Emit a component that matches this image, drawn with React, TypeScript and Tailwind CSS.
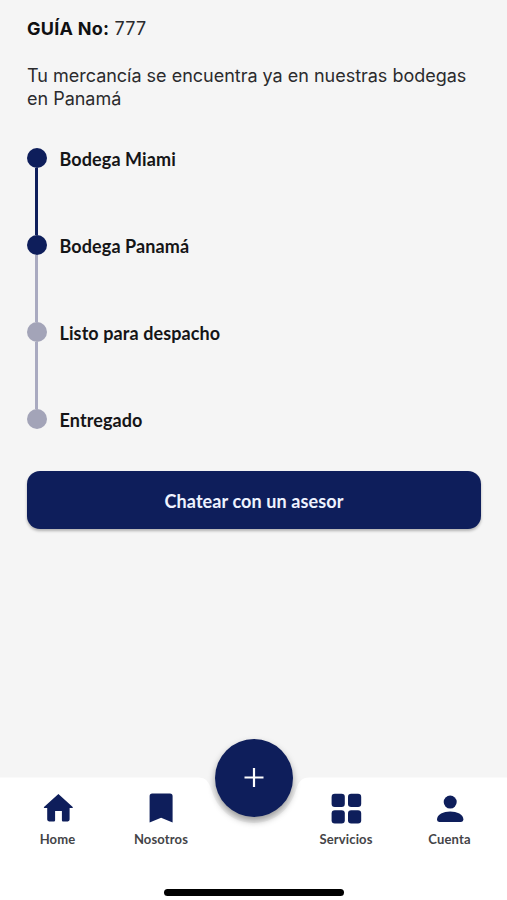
import React from "react";

type Step = { label: string; done: boolean; lineDone?: boolean };

const steps: Step[] = [
  { label: "Bodega Miami", done: true, lineDone: true },
  { label: "Bodega Panamá", done: true, lineDone: false },
  { label: "Listo para despacho", done: false, lineDone: false },
  { label: "Entregado", done: false },
];

function HomeIcon() {
  return (
    <svg className="block h-[32px] w-[32px]" viewBox="0 0 32 32" fill="currentColor">
      <path d="M16.4 2 30.7 15.1Q31.3 16 30.3 16H27.6V27.6Q27.6 29.4 25.8 29.4H21Q19.9 29.4 19.9 28.2V19H13.1V28.2Q13.1 29.4 11.9 29.4H7.1Q5.2 29.4 5.2 27.6V16H2.4Q1.4 16 2 15.1Z" />
    </svg>
  );
}

function BookmarkIcon() {
  return (
    <svg className="block h-[32px] w-[32px]" viewBox="0 0 32 32" fill="currentColor">
      <path d="M7.2 1.6H25Q27.6 1.6 27.6 4.2V30.6L16.1 25.8 4.6 30.6V4.2Q4.6 1.6 7.2 1.6Z" />
    </svg>
  );
}

function GridIcon() {
  return (
    <svg className="block h-[32px] w-[32px]" viewBox="0 0 32 32" fill="currentColor">
      <rect x="1.6" y="1.8" width="13.2" height="13.2" rx="3.2" />
      <rect x="18" y="1.8" width="13.2" height="13.2" rx="3.2" />
      <rect x="1.6" y="18.2" width="13.2" height="13.2" rx="3.2" />
      <rect x="18" y="18.2" width="13.2" height="13.2" rx="3.2" />
    </svg>
  );
}

function UserIcon() {
  return (
    <svg className="block h-[32px] w-[32px]" viewBox="0 0 32 32" fill="currentColor">
      <circle cx="16.2" cy="10.1" r="6.5" />
      <path d="M3 27.5C3 22.4 9.5 19.5 16.2 19.5s13.2 2.9 13.2 8Q29.4 29.9 27.1 29.9H5.2Q3 29.9 3 27.5Z" />
    </svg>
  );
}

function NavItem({ label, children }: { label: string; children: React.ReactNode }) {
  return (
    <button className="flex w-[103.5px] flex-col items-center pt-[15px] text-[#0e1e5b]">
      {children}
      <span className="mt-[6px] text-[13px] leading-[18px] font-bold tracking-[0.15px] text-[#444447]">{label}</span>
    </button>
  );
}

export default function App() {
  return (
    <div className="flex h-[900px] w-[507px] flex-col overflow-hidden bg-[#f5f5f5] font-['Lato',sans-serif]">
      <main className="flex-1 px-[27px] pt-[17px]">
        <header className="font-['Inter',sans-serif] text-[18px] leading-[23.5px] text-[#2b2b2d]">
          <h1 className="tracking-[0.25px]">
            <strong className="font-bold text-[#101012]">GUÍA No:</strong> 777
          </h1>
          <p className="mt-[23px] w-[450px] tracking-[-0.01px]">
            Tu mercancía se encuentra ya en nuestras bodegas en Panamá
          </p>
        </header>

        <ol className="mt-[37.5px]">
          {steps.map((s) => (
            <li key={s.label} className="flex h-[87px] gap-[13px] last:h-[20px]">
              <div className="flex w-[19.5px] flex-col items-center">
                <span className={`size-[19.5px] shrink-0 rounded-full ${s.done ? "bg-[#0e1e5b]" : "bg-[#a3a4b8]"}`} />
                {s.lineDone !== undefined && (
                  <span className={`w-[3px] flex-1 ${s.lineDone ? "bg-[#0e1e5b]" : "bg-[#a9aac0]"}`} />
                )}
              </div>
              <span className="text-[18px] leading-[22px] font-bold tracking-[0.1px] text-[#151517]">{s.label}</span>
            </li>
          ))}
        </ol>

        <button className="mt-[41.5px] flex h-[58px] w-[454px] items-center justify-center rounded-[13px] bg-[#0e1e5b] pt-[3px] text-[18px] font-bold tracking-[0.1px] text-[#eef3ff] shadow-[0_2px_3px_rgba(0,0,0,0.28)]">
          Chatear con un asesor
        </button>
      </main>

      <footer className="relative h-[123px]">
        <svg className="absolute inset-0 h-[123px] w-[507px]" viewBox="0 0 507 123">
          <path
            fill="#ffffff"
            d="M0 .5H198C206 .5 209 5 211.5 13C217 32 233 46 253.7 46S290.500 32 296 13C298.500 5 301.500 .5 309.500 .5H507V123H0Z"
          />
        </svg>
        <button className="absolute top-[-38.5px] left-[214.700px] flex size-[78px] items-center justify-center rounded-full bg-[#0e1e5b] shadow-[0_4px_7px_rgba(0,0,0,0.38)]">
          <svg className="size-[20px]" viewBox="0 0 20 20" stroke="#ffffff" strokeWidth="2.2">
            <path d="M10 0V19M.5 9.5H19.500" />
          </svg>
        </button>
        <nav className="relative flex justify-between px-[5.75px] pointer-events-none">
          <div className="flex">
            <NavItem label="Home"><HomeIcon /></NavItem>
            <NavItem label="Nosotros"><BookmarkIcon /></NavItem>
          </div>
          <div className="flex">
            <NavItem label="Servicios"><GridIcon /></NavItem>
            <NavItem label="Cuenta"><UserIcon /></NavItem>
          </div>
        </nav>
        <div className="relative mx-auto mt-[41px] h-[6.500px] w-[180px] rounded-full bg-black" />
      </footer>
    </div>
  );
}
